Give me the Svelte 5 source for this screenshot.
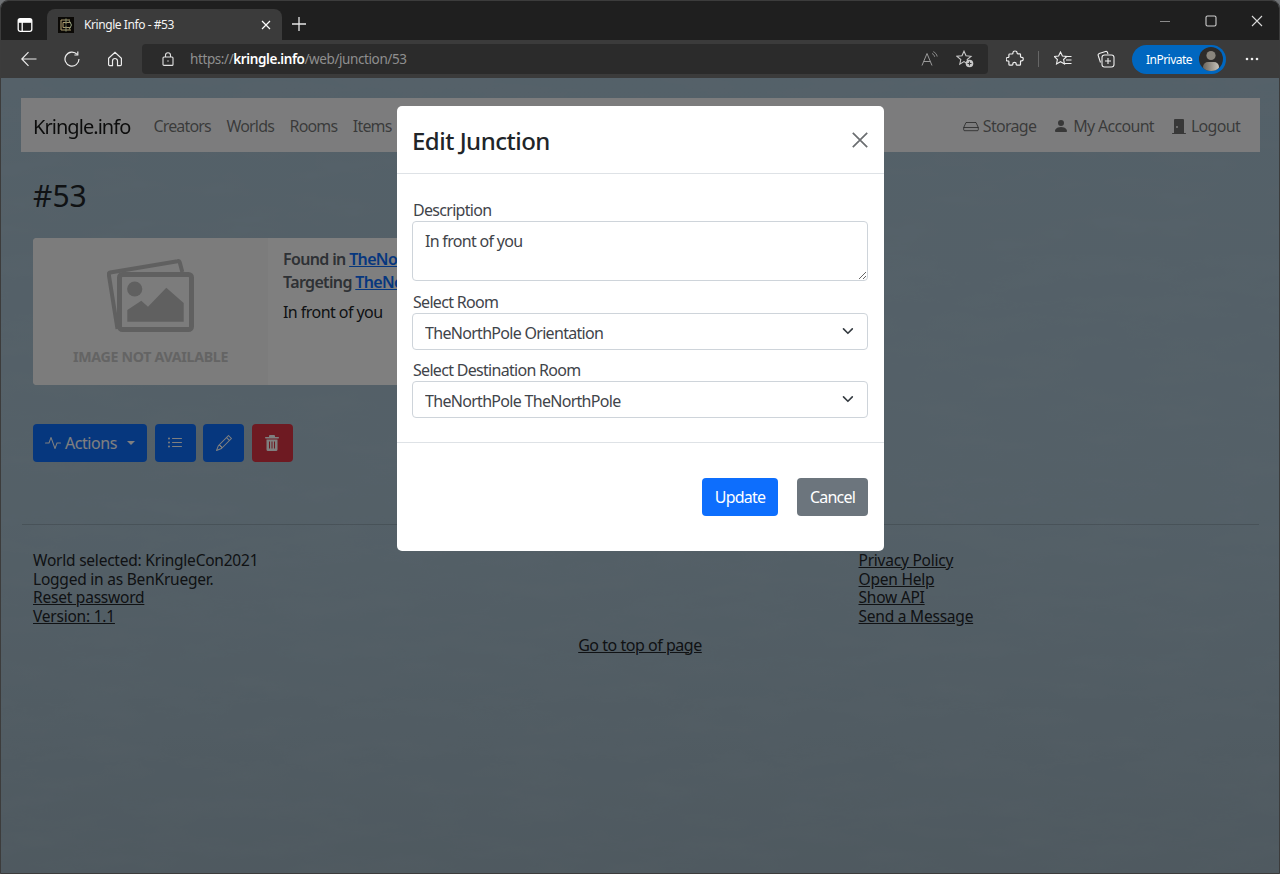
<script>
  const leftFoot = ['World selected: KringleCon2021', 'Logged in as BenKrueger.'];
  const leftLinks = ['Reset password', 'Version: 1.1'];
  const rightLinks = ['Privacy Policy', 'Open Help', 'Show API', 'Send a Message'];
  const navLinks = ['Creators', 'Worlds', 'Rooms', 'Items'];
</script>

<div class="window">
  <header class="titlebar">
    <svg class="tabs-ic" width="16" height="16" viewBox="0 0 16 16" fill="none" stroke="#fff" stroke-width="1.3"><rect x="1.2" y="1.7" width="13.6" height="12.6" rx="2"/><path d="M1.2 5.2h13.6M5.2 5.2v9" /><rect x="1.2" y="1.7" width="13.6" height="3.5" rx="1.5" fill="#fff" stroke="none"/></svg>
    <div class="tab">
      <svg class="fav" width="16" height="16" viewBox="0 0 16 16"><rect width="16" height="16" fill="#0b0906"/><g fill="none" stroke="#a8976a" stroke-width="1.1"><path d="M3 3h9M3 3v10M3 13h10M5 5.500h8M5 5.500v5M5 10.500h8"/><path d="M8 1.500v6M8 8.500v6M11 3.500 13.500 8 11 12.500" stroke="#7f8a6c"/></g></svg>
      <span class="tab-title">Kringle Info - #53</span>
      <svg class="tab-x" width="10" height="10" viewBox="0 0 10 10" stroke="#fff" stroke-width="1.2"><path d="M1 1l8 8M9 1l-8 8"/></svg>
    </div>
    <svg class="plus" width="14" height="14" viewBox="0 0 14 14" stroke="#e6e6e6" stroke-width="1.3"><path d="M7 0v14M0 7h14"/></svg>
    <div class="win-ctrls">
      <svg width="12" height="12" viewBox="0 0 12 12" stroke="#8a8a8a"><path d="M1 6.5h10"/></svg>
      <svg width="12" height="12" viewBox="0 0 12 12" fill="none" stroke="#cfcfcf" stroke-width="1.1"><rect x="1" y="1" width="10" height="10" rx="1.5"/></svg>
      <svg width="12" height="12" viewBox="0 0 12 12" stroke="#d8d8d8" stroke-width="1.1"><path d="M1 1l10 10M11 1L1 11"/></svg>
    </div>
  </header>

  <div class="toolbar">
    <svg class="tool back" width="16" height="16" viewBox="0 0 16 16" fill="none" stroke="#ececec" stroke-width="1.2"><path d="M15.5 8H.8M7.5 1.2.8 8l6.7 6.8"/></svg>
    <svg class="tool reload" width="16" height="16" viewBox="0 0 16 16" fill="none" stroke="#ececec" stroke-width="1.2"><path d="M13.2 3.4A7 7 0 1 0 15 8"/><path d="M13.8.6v3.4h-3.4"/></svg>
    <svg class="tool home" width="16" height="16" viewBox="0 0 16 16" fill="none" stroke="#ececec" stroke-width="1.2"><path d="M1.6 7.2 8 1.2l6.4 6v6.4a1 1 0 0 1-1 1h-2.9V10a2.5 2.5 0 0 0-5 0v4.6H2.6a1 1 0 0 1-1-1z"/></svg>
    <div class="address">
      <svg class="lock" width="12" height="14" viewBox="0 0 12 14" fill="none" stroke="#e2e2e2" stroke-width="1.1"><rect x="1" y="5" width="10" height="8.4" rx="1"/><path d="M3.5 5V3.2a2.5 2.5 0 0 1 5 0V5"/><circle cx="6" cy="9" r=".7" fill="#e2e2e2" stroke="none"/></svg>
      <span class="url"><span class="dim">https://</span><b>kringle.info</b><span class="dim">/web/junction/53</span></span>
      <div class="addr-icons">
        <svg width="18" height="16" viewBox="0 0 18 16" fill="none" stroke="#9a9a9a" stroke-width="1"><path d="M1 14.5 6 2.5l5 12M2.8 10.5h6.4"/><path d="M11 2.5c1.5.7 2.3 1.8 2.7 3.3M12.3.7c2.2 1 3.4 2.6 3.9 4.8" stroke-width=".9"/></svg>
        <svg width="18" height="18" viewBox="0 0 18 18" fill="none" stroke="#c9c9c9" stroke-width="1.1"><path d="M8 1.2l2 4.6 5 .5-3.8 3.2 1 4.6L8 11.6l-4.2 2.5 1-4.6L1 6.3l5-.5z"/><circle cx="13.5" cy="13.5" r="3.8" fill="#c9c9c9" stroke="none"/><path d="M13.5 11.5v4M11.5 13.5h4" stroke="#3a3a3a"/></svg>
      </div>
    </div>
    <svg class="tool ext" width="18" height="18" viewBox="0 0 18 18" fill="none" stroke="#efefef" stroke-width="1.2"><path d="M7 2.5c0-2 4-2 4 0 0 1 0 1.300 1 1.300h1.800a.8.8 0 0 1 .7.700v2c0 1 1 .8 1.500.8 1.700 0 1.700 3.500 0 3.500-.5 0-1.500-.2-1.500.8v2.600a.9.900 0 0 1-.9.900H11c-1 0-.8-1-.8-1.300 0-1.800-3.400-1.800-3.400 0 0 .3.200 1.300-.8 1.300H3.800a.9.900 0 0 1-.9-.9v-2.400c0-1-1-.8-1.400-.8-1.800 0-1.800-3.500 0-3.500.4 0 1.400.2 1.400-.8v-2a.8.800 0 0 1 .8-.7H6c1 0 1-.3 1-1.300z"/></svg>
    <span class="sep"></span>
    <svg class="tool favs" width="18" height="16" viewBox="0 0 18 16" fill="none" stroke="#efefef" stroke-width="1.1"><path d="M6.500 1l1.900 4 4.400.500-3.200 3 .9 4.400-4-2.200-4 2.200.9-4.400L.2 5.500 4.600 5z"/><path d="M11 5.500h6.500M12 9h5.500M10.500 12.500h7"/></svg>
    <svg class="tool coll" width="18" height="18" viewBox="0 0 18 18" fill="none" stroke="#efefef" stroke-width="1.1"><path d="M3.500 12.500 1.200 5.500a1.500 1.500 0 0 1 1-1.900L8.500 1.500c.9-.3 1.700.1 2 1l.5 1.500"/><rect x="5" y="5" width="12" height="12" rx="2.500"/><path d="M11 8v6M8 11h6"/></svg>
    <div class="inprivate">
      <span>InPrivate</span>
      <svg class="avatar" width="24" height="24" viewBox="0 0 24 24"><defs><clipPath id="av"><circle cx="12" cy="12" r="12"/></clipPath><linearGradient id="avg" x1="0" x2="1"><stop offset="0" stop-color="#6a645b"/><stop offset="1" stop-color="#c6c2b9"/></linearGradient></defs><g clip-path="url(#av)"><rect width="24" height="24" fill="#2e2c2a"/><circle cx="12" cy="8.500" r="4.600" fill="#8a857c"/><rect x="4" y="15" width="16" height="10" rx="5" fill="url(#avg)"/></g></svg>
    </div>
    <svg class="tool more" width="14" height="4" viewBox="0 0 14 4" fill="#efefef"><circle cx="2" cy="2" r="1.300"/><circle cx="7" cy="2" r="1.300"/><circle cx="12" cy="2" r="1.300"/></svg>
  </div>

  <div class="viewport">
    <svg class="texture" width="100%" height="100%" aria-hidden="true"><filter id="grain" x="0" y="0" width="100%" height="100%"><feTurbulence type="fractalNoise" baseFrequency="0.014 0.05" numOctaves="4" seed="11"/><feColorMatrix values="0 0 0 0 1  0 0 0 0 1  0 0 0 0 1  0.9 0 0 0 -0.34"/></filter><rect width="100%" height="100%" filter="url(#grain)" opacity=".08"/></svg>
    <div class="page">
      <nav class="navbar">
        <a class="brand" href="#top">Kringle.info</a>
        <ul class="nav-left">
          {#each navLinks as link}<li>{link}</li>{/each}
        </ul>
        <ul class="nav-right">
          <li><svg width="16" height="16" viewBox="0 0 16 16" fill="none" stroke="currentColor" stroke-width="1"><path d="M.7 9.500 3 4.500h10l2.300 5v2.200a1 1 0 0 1-1 1H1.700a1 1 0 0 1-1-1z"/><path d="M.7 9.500h14.600"/></svg>Storage</li>
          <li><svg width="16" height="16" viewBox="0 0 16 16" fill="currentColor"><path d="M3 14s-1 0-1-1 1-4 6-4 6 3 6 4-1 1-1 1H3Zm5-6a3 3 0 1 0 0-6 3 3 0 0 0 0 6Z"/></svg>My Account</li>
          <li><svg width="16" height="16" viewBox="0 0 16 16" fill="currentColor"><path transform="matrix(-1 0 0 1 16 0)" d="M12 1a1 1 0 0 1 1 1v13h1.500a.5.5 0 0 1 0 1h-13a.5.5 0 0 1 0-1H3V2a1 1 0 0 1 1-1h8zm-2 9a1 1 0 1 0 0-2 1 1 0 0 0 0 2z"/></svg>Logout</li>
        </ul>
      </nav>

      <main class="content">
        <h1>#53</h1>
        <section class="card">
          <div class="placeholder">
            <svg width="88" height="74" viewBox="-1 -1 88 74" fill="none"><path d="M9.500 69 .8 14.500c-.2-1 .4-1.800 1.400-2L69.500 1.200c1-.2 2 .4 2.300 1.400l2.500 9.400" stroke="#c0c0c0" stroke-width="4"/><rect x="11.500" y="14.500" width="72" height="55" rx="3" stroke="#c0c0c0" stroke-width="5"/><circle cx="26.700" cy="29" r="7.600" fill="#c0c0c0"/><path d="M19.300 61.700V50l14-9.300 6.700 6L58.300 27.700 75.700 43v18.700z" fill="#c0c0c0"/></svg>
            <span class="na">IMAGE NOT AVAILABLE</span>
          </div>
          <div class="card-body">
            <p class="strong">Found in <a href="#top">TheNorthPole</a></p>
            <p class="strong">Targeting <a href="#top">TheNorthPole</a></p>
            <p class="desc">In front of you</p>
          </div>
        </section>
        <div class="actions">
          <button class="btn primary act"><svg width="16" height="16" viewBox="0 0 16 16" fill="currentColor"><path d="M6 2a.5.5 0 0 1 .47.33L10 12.036l1.530-4.208A.5.5 0 0 1 12 7.500h3.500a.5.5 0 0 1 0 1h-3.150l-1.880 5.170a.5.5 0 0 1-.94 0L6 3.964 4.470 8.171A.5.5 0 0 1 4 8.500H.5a.5.5 0 0 1 0-1h3.150l1.880-5.170A.5.5 0 0 1 6 2Z"/></svg>Actions<span class="caret"></span></button>
          <button class="btn primary icon" aria-label="List"><svg width="16" height="16" viewBox="0 0 16 16" fill="currentColor"><path d="M5 11.500a.5.5 0 0 1 .5-.5h9a.5.5 0 0 1 0 1h-9a.5.5 0 0 1-.5-.5zm0-4a.5.5 0 0 1 .5-.5h9a.5.5 0 0 1 0 1h-9a.5.5 0 0 1-.5-.5zm0-4a.5.5 0 0 1 .5-.5h9a.5.5 0 0 1 0 1h-9a.5.5 0 0 1-.5-.5zm-3 1a1 1 0 1 0 0-2 1 1 0 0 0 0 2zm0 4a1 1 0 1 0 0-2 1 1 0 0 0 0 2zm0 4a1 1 0 1 0 0-2 1 1 0 0 0 0 2z"/></svg></button>
          <button class="btn primary icon" aria-label="Edit"><svg width="16" height="16" viewBox="0 0 16 16" fill="currentColor"><path d="M12.146.146a.5.5 0 0 1 .708 0l3 3a.5.5 0 0 1 0 .708l-10 10a.5.5 0 0 1-.168.110l-5 2a.5.5 0 0 1-.650-.650l2-5a.5.5 0 0 1 .110-.168l10-10zM11.207 2.500 13.500 4.793 14.793 3.500 12.500 1.207 11.207 2.500zm1.586 3L10.500 3.207 4 9.707V10h.5a.5.5 0 0 1 .5.5v.5h.5a.5.5 0 0 1 .5.5v.5h.293l6.500-6.500zm-9.761 5.175-.106.106-1.528 3.821 3.821-1.528.106-.106A.5.5 0 0 1 5 12.500V12h-.5a.5.5 0 0 1-.5-.5V11h-.5a.5.5 0 0 1-.468-.325z"/></svg></button>
          <button class="btn danger icon" aria-label="Delete"><svg width="14" height="16" viewBox="0 0 14 16" fill="currentColor"><path fill-rule="evenodd" d="M5 0h4a1 1 0 0 1 1 1v1h3.300a.7.7 0 0 1 0 1.400H.7A.7.7 0 0 1 .7 2H4V1a1 1 0 0 1 1-1zM1.500 4.500h11V14.500A1.500 1.500 0 0 1 11 16H3a1.500 1.500 0 0 1-1.500-1.500zM4 6.500v7h1v-7zm2.500 0v7h1v-7zm2.500 0v7h1v-7z"/></svg></button>
        </div>
      </main>

      <hr />
      <footer class="foot">
        <div class="foot-left">
          {#each leftFoot as t}<div class="fl"><span>{t}</span></div>{/each}
          {#each leftLinks as t}<div class="fl"><a href="#top">{t}</a></div>{/each}
        </div>
        <div class="foot-right">
          {#each rightLinks as t}<div class="fl"><a href="#top">{t}</a></div>{/each}
        </div>
      </footer>
      <div class="totop"><a href="#top">Go to top of page</a></div>
    </div>

    <div class="backdrop"></div>

    <div class="modal" role="dialog">
      <div class="m-head">
        <h2>Edit Junction</h2>
        <svg width="16" height="16" viewBox="0 0 16 16" stroke="#6b6e71" stroke-width="1.700" aria-label="Close"><path d="M.8.800l14.400 14.400M15.200.800.800 15.200"/></svg>
      </div>
      <form class="m-body">
        <label for="desc">Description</label>
        <textarea id="desc">In front of you</textarea>
        <label class="l2" for="room">Select Room</label>
        <div class="sel">
          <select id="room"><option>TheNorthPole Orientation</option></select>
          <svg width="16" height="16" viewBox="0 0 16 16" fill="none" stroke="#343a40" stroke-width="2" stroke-linecap="round" stroke-linejoin="round"><path d="m2.500 5.500 5.500 5.500 5.500-5.500" transform="translate(1.500 1.500) scale(.8)"/></svg>
        </div>
        <label class="l3" for="dest">Select Destination Room</label>
        <div class="sel">
          <select id="dest"><option>TheNorthPole TheNorthPole</option></select>
          <svg width="16" height="16" viewBox="0 0 16 16" fill="none" stroke="#343a40" stroke-width="2" stroke-linecap="round" stroke-linejoin="round"><path d="m2.500 5.500 5.500 5.500 5.500-5.500" transform="translate(1.500 1.500) scale(.8)"/></svg>
        </div>
      </form>
      <div class="m-foot">
        <button class="btn update">Update</button>
        <button class="btn cancel">Cancel</button>
      </div>
    </div>
  </div>
</div>

<style>
  :global(body) { margin: 0; background: #6f7275; }
  .window {
    width: 1280px; height: 874px; display: flex; flex-direction: column; overflow: hidden;
    box-sizing: border-box; border: 1px solid #3c3c3c; border-radius: 8px 8px 0 0;
    font-family: "Noto Sans", "Open Sans", sans-serif; position: relative;
  }
  .titlebar { height: 39px; background: #1f1f1f; display: flex; align-items: flex-end; flex: none; position: relative; }
  .tabs-ic { margin: 0 14px 7px 16px; }
  .tab {
    width: 235px; height: 31px; box-sizing: border-box; background: #3b3b3b; border-radius: 8px 8px 0 0;
    display: flex; align-items: center; padding: 0 11px; color: #f3f3f3; font-size: 12px;
  }
  .fav { margin-right: 10px; }
  .tab-title { flex: 1; letter-spacing: -.43px; }
  .plus { margin: 0 0 9px 10px; }
  .win-ctrls { margin-left: auto; display: flex; gap: 34px; align-items: center; align-self: flex-start; margin-top: 14px; padding-right: 16px; }

  .toolbar { height: 38px; background: #3b3b3b; display: flex; align-items: center; flex: none; }
  .back { margin-left: 20px; }
  .reload { margin-left: 27px; }
  .home { margin-left: 27px; }
  .address {
    margin-left: 19px; width: 846px; height: 30px; background: #2b2b2b; border-radius: 4px;
    display: flex; align-items: center; font-size: 13.500px; box-sizing: border-box;
  }
  .lock { margin-left: 20px; }
  .url { margin-left: 16px; color: #fff; letter-spacing: -.4px; }
  .url b { font-weight: 600; }
  .dim { color: #8f8f8f; }
  .addr-icons { margin-left: auto; display: flex; gap: 17px; padding-right: 14px; align-items: center; }
  .ext { margin-left: 18px; }
  .sep { width: 1px; height: 16px; background: #666; margin-left: 14px; }
  .favs { margin-left: 15px; }
  .coll { margin-left: 25px; }
  .inprivate {
    margin-left: 17px; width: 94px; height: 29px; box-sizing: border-box; background: #0067c0; border-radius: 15px;
    display: flex; align-items: center; justify-content: space-between; padding: 0 3px 0 14px; color: #fff; font-size: 12px; letter-spacing: -.53px;
  }
  .more { margin-left: 19px; }

  .viewport {
    flex: 1; position: relative; overflow: hidden;
    background: linear-gradient(180deg, #a9c2d2 0%, #a8c0cf 55%, #9eb3c0 100%);
  }
  .texture { position: absolute; inset: 0; }
  .page { position: relative; padding: 20px 19px 0 20px; color: #212529; font-size: 16px; letter-spacing: -.55px; }
  a { color: inherit; }
  .navbar {
    height: 54px; box-sizing: border-box; background: #f8f9fa; display: flex; align-items: center; padding: 2px 12px 0; letter-spacing: -.7px;
  }
  .brand { font-size: 20px; color: #000; text-decoration: none; opacity: .9; letter-spacing: -.95px; margin-right: 23px; }
  ul { list-style: none; margin: 0; padding: 0; display: flex; }
  .nav-left { gap: 15.500px; color: rgba(0,0,0,.55); letter-spacing: -.82px; }
  .nav-right { margin-left: auto; gap: 17px; color: rgba(0,0,0,.55); padding-right: 8px; }
  .nav-right li { display: flex; align-items: center; gap: 4px; }
  .content { padding: 0 12px; }
  h1 { font-size: 30px; font-weight: 400; margin: 26px 0 0; line-height: 36px; letter-spacing: 0; }
  .card { margin-top: 24px; width: 500px; height: 147px; background: #fff; border-radius: 4px; display: flex; overflow: hidden; }
  .placeholder { width: 235px; background: #f8f8f8; display: flex; flex-direction: column; align-items: center; padding-top: 21px; box-sizing: border-box; flex: none; }
  .na { margin-top: 14px; font-size: 14.200px; font-weight: 700; color: #c8c8c8; letter-spacing: -.3px; line-height: 20px; }
  .card-body { padding: 10px 15px; }
  .card-body p { margin: 0; line-height: 23px; }
  .card-body a { color: #0d6efd; font-weight: 600; }
  .strong { font-weight: 600; color: #5c636a; letter-spacing: -.65px; }
  .card-body .desc { margin-top: 7px; font-weight: 400; }
  .actions { display: flex; gap: 7.500px; margin-top: 39px; }
  .btn {
    height: 38px; border: 1px solid transparent; border-radius: 4px; color: #fff; font: inherit; letter-spacing: -.4px;
    display: inline-flex; align-items: center; justify-content: center; padding: 0; box-sizing: border-box;
  }
  .primary { background: #0d6efd; }
  .danger { background: #dc3545; }
  .act { width: 114px; gap: 4px; }
  .icon { width: 41px; }
  .caret { width: 0; height: 0; border: 4.800px solid transparent; border-top-color: currentColor; border-bottom: 0; margin-left: 6px; }
  hr { margin: 62px 1px 0; border: 0; border-top: 1px solid rgba(0,0,0,.14); }
  .foot { display: flex; padding: 26px 12px 0; font-size: 15.500px; line-height: 18.670px; letter-spacing: -.22px; }
  .foot-left { width: 825.500px; }
  .fl { height: 18.670px; }
  .fl a, .fl span { display: inline-block; height: 18.670px; vertical-align: top; }
  .totop { text-align: center; margin-top: 9px; line-height: 20px; padding-right: 1px; letter-spacing: -.47px; }

  .backdrop { position: absolute; inset: 0; background: rgba(0,0,0,.5); }
  .modal {
    position: absolute; left: 396px; top: 28px; width: 487px; height: 445px; background: #fff; border-radius: 5px;
    color: #212529; font-size: 16px; letter-spacing: -.7px; box-sizing: border-box; display: flex; flex-direction: column;
  }
  .m-head { height: 68px; box-sizing: border-box; border-bottom: 1px solid #dee2e6; display: flex; align-items: center; justify-content: space-between; padding: 1px 16px 0; flex: none; }
  h2 { margin: 0 0 0 -1px; font-size: 24px; font-weight: 500; letter-spacing: -.5px; line-height: 29px; }
  .m-body { padding: 24px 16px 24px; border-bottom: 1px solid #dee2e6; display: flex; flex-direction: column; flex: none; }
  label { line-height: 24px; margin-bottom: -1px; color: #3f444a; }
  .l2 { margin-top: 9px; }
  .l3 { margin-top: 8px; }
  textarea, select {
    font: inherit; letter-spacing: inherit; color: #3f444a; border: 1px solid #ced4da; border-radius: 4px; background: #fff;
    box-sizing: border-box; width: 100%; padding: 7px 12px 5px; outline: none; margin: 0;
  }
  textarea { height: 60px; display: block; margin-left: -1px; width: 456px; line-height: 24px; }
  .sel { position: relative; margin-left: -1px; width: 456px; }
  select { height: 37px; appearance: none; display: block; }
  .sel svg { position: absolute; right: 12px; top: 10px; pointer-events: none; }
  .m-foot { display: flex; justify-content: flex-end; gap: 19px; padding: 35px 16px; flex: none; letter-spacing: -.8px; }
  .m-foot .btn { letter-spacing: -.8px; }
  .update { width: 76px; background: #0d6efd; }
  .cancel { width: 71px; background: #6c757d; }
</style>
